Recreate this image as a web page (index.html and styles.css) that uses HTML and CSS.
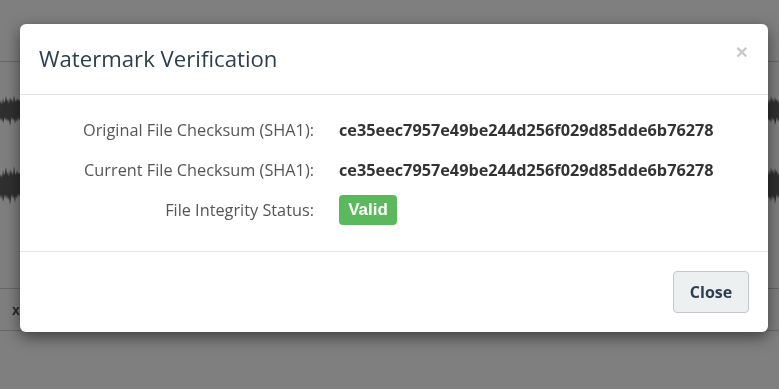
FILE: index.html
```html
<!DOCTYPE html>
<html>
<head>
<meta charset="utf-8">
<link rel="stylesheet" href="styles.css">
</head>
<body>
<div class="app">
  <div class="toolbar"></div>
  <div class="wave-area">
    <svg class="wave" width="779" height="226" viewBox="0 62 779 226">
      <path d="M0,104 L1,100 L2,105 L3,98 L4,103 L5,101 L6,96 L7,102 L8,99 L9,104 L10,97 L11,101 L12,99 L13,103 L14,95 L15,100 L16,102 L17,98 L18,101 L19,99 L20,102 L20,118 L19,121 L18,117 L17,122 L16,119 L15,124 L14,118 L13,121 L12,117 L11,120 L10,126 L9,119 L8,122 L7,118 L6,121 L5,117 L4,120 L3,123 L2,118 L1,121 L0,117 Z"/>
      <path d="M0,177 L1,174 L2,178 L3,170 L4,176 L5,172 L6,167 L7,175 L8,171 L9,177 L10,169 L11,174 L12,171 L13,176 L14,166 L15,173 L16,175 L17,170 L18,174 L19,172 L20,175 L20,194 L19,197 L18,193 L17,199 L16,195 L15,203 L14,196 L13,199 L12,194 L11,198 L10,205 L9,197 L8,200 L7,195 L6,199 L5,194 L4,198 L3,202 L2,195 L1,199 L0,194 Z"/>
      <path d="M768,104 L769,99 L770,103 L771,96 L772,101 L773,98 L774,103 L775,97 L776,101 L777,99 L778,103 L779,100 L779,119 L778,122 L777,117 L776,121 L775,125 L774,118 L773,121 L772,117 L771,123 L770,119 L769,121 L768,118 Z"/>
      <path d="M768,176 L769,170 L770,175 L771,167 L772,173 L773,169 L774,175 L775,168 L776,173 L777,170 L778,176 L779,172 L779,195 L778,199 L777,194 L776,198 L775,204 L774,196 L773,200 L772,195 L771,202 L770,197 L769,199 L768,195 Z"/>
    </svg>
  </div>
  <div class="track-row"><span class="track-x">x</span></div>
</div>

<div class="modal">
  <div class="modal-header">
    <h4 class="modal-title">Watermark Verification</h4>
    <span class="close">×</span>
  </div>
  <div class="modal-body">
    <div class="info-grid">
      <div class="label">Original File Checksum (SHA1):</div>
      <div class="value">ce35eec7957e49be244d256f029d85dde6b76278</div>
      <div class="label">Current File Checksum (SHA1):</div>
      <div class="value">ce35eec7957e49be244d256f029d85dde6b76278</div>
      <div class="label">File Integrity Status:</div>
      <div class="value"><span class="badge">Valid</span></div>
    </div>
  </div>
  <div class="modal-footer">
    <button class="btn">Close</button>
  </div>
</div>
</body>
</html>
```

FILE: styles.css
```css
html, body {
  margin: 0;
  padding: 0;
}
body {
  background: #7f7f7f;
  width: 779px;
  height: 389px;
  overflow: hidden;
  font-family: "Open Sans", "Liberation Sans", sans-serif;
}
.app {
  display: flex;
  flex-direction: column;
}
.toolbar {
  height: 61px;
  border-bottom: 1px solid #676767;
}
.wave-area {
  height: 226px;
  border-bottom: 1px solid #676767;
}
.wave {
  display: block;
}
.wave path {
  fill: #2f2f2f;
}
.track-row {
  height: 41px;
  border-bottom: 1px solid #676767;
  display: flex;
  align-items: center;
  padding-left: 12px;
}
.track-x {
  font-family: "Liberation Sans", sans-serif;
  font-weight: bold;
  font-size: 14px;
  color: #1d2a36;
}

.modal {
  position: fixed;
  left: 20px;
  top: 24px;
  width: 748px;
  background: #fff;
  border-radius: 6px;
  box-shadow: 0 5px 15px rgba(0, 0, 0, 0.5);
  display: flex;
  flex-direction: column;
}
.modal-header {
  display: flex;
  justify-content: space-between;
  align-items: flex-start;
  padding: 19px 20px 20px 19px;
  border-bottom: 1px solid #e5e5e5;
}
.modal-title {
  margin: 0;
  font-size: 22.2px;
  font-weight: normal;
  line-height: 31px;
  color: #2c3e50;
}
.close {
  font-family: "Liberation Sans", sans-serif;
  font-weight: bold;
  font-size: 21px;
  line-height: 21px;
  color: #c9c9c9;
  margin-top: -2px;
}
.modal-body {
  padding: 15px 20px 21px;
}
.info-grid {
  display: grid;
  grid-template-columns: 274px 1fr;
  column-gap: 25px;
  grid-auto-rows: 40px;
  align-items: center;
}
.label {
  text-align: right;
  font-size: 16.3px;
  color: #555;
}
.value {
  font-size: 16.25px;
  font-weight: bold;
  color: #333;
}
.badge {
  display: inline-flex;
  align-items: center;
  justify-content: center;
  width: 58px;
  height: 30px;
  border-radius: 4px;
  background: #5cb85c;
  color: #fff;
  font-family: "Liberation Sans", sans-serif;
  font-weight: bold;
  font-size: 17px;
}
.modal-footer {
  display: flex;
  justify-content: flex-end;
  padding: 19px 19px 19px;
  border-top: 1px solid #e5e5e5;
}
.btn {
  width: 76px;
  height: 42px;
  background: #ecf0f1;
  border: 1px solid #c4c8cb;
  border-radius: 4px;
  font-family: "Open Sans", sans-serif;
  font-weight: bold;
  font-size: 16px;
  color: #2c3e50;
  padding: 0;
}
```
